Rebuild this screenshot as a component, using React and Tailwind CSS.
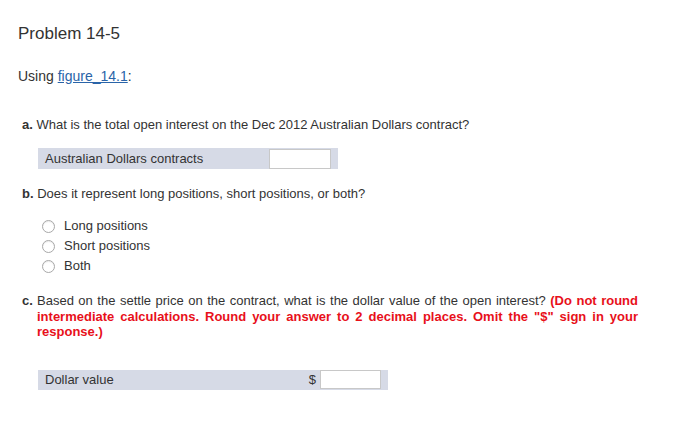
export default function App() {
  const Radio = ({ label }) => (
    <div className="flex items-center h-[20px]">
      <span className="w-[13px] h-[13px] rounded-full border border-[#a8a8a8] bg-white ml-[24px] mr-[9px] shadow-[inset_0_1px_1px_rgba(0,0,0,0.08)]" />
      <span className="text-[13px]">{label}</span>
    </div>
  );
  return (
    <div className="w-[700px] h-[425px] bg-white pl-[18px] pt-[23px] text-[#333] font-['Liberation_Sans',Arial,sans-serif]">
      <h1 className="text-[17px] leading-[22px]">Problem 14-5</h1>
      <p className="mt-[22px] text-[14px] leading-[18px]">
        Using <span className="text-[#2a64a8] underline">figure_14.1</span>:
      </p>
      <p className="mt-[32px] ml-[4px] text-[13px] leading-[16px]">
        <b>a.</b> What is the total open interest on the Dec 2012 Australian Dollars contract?
      </p>
      <div className="mt-[15px] ml-[20px] w-[300px] h-[21px] bg-[#d6dae6] flex items-center justify-between pl-[7px] pr-[7px]">
        <span className="text-[13px]">Australian Dollars contracts</span>
        <span className="w-[62px] h-[20px] bg-white border border-[#c8c8c8]" />
      </div>
      <p className="mt-[17px] ml-[4px] text-[13px] leading-[16px]">
        <b>b.</b> Does it represent long positions, short positions, or both?
      </p>
      <div className="mt-[14px]">
        <Radio label="Long positions" />
        <Radio label="Short positions" />
        <Radio label="Both" />
      </div>
      <div className="mt-[17px] ml-[4px] flex text-[13px] leading-[15.5px]">
        <b className="w-[15px] shrink-0">c.</b>
        <p className="w-[601px] text-justify">
          Based on the settle price on the contract, what is the dollar value of the open interest?{" "}
          <b className="text-[#e8101a]">
            (Do not round intermediate calculations. Round your answer to 2 decimal places. Omit the "$" sign in your response.)
          </b>
        </p>
      </div>
      <div className="mt-[30px] ml-[20px] w-[350px] h-[20px] bg-[#d6dae6] flex items-center pl-[7px] pr-[7px]">
        <span className="text-[13px] flex-1">Dollar value</span>
        <span className="text-[13px] mr-[4px]">$</span>
        <span className="w-[61px] h-[19px] bg-white border border-[#c8c8c8]" />
      </div>
    </div>
  );
}
